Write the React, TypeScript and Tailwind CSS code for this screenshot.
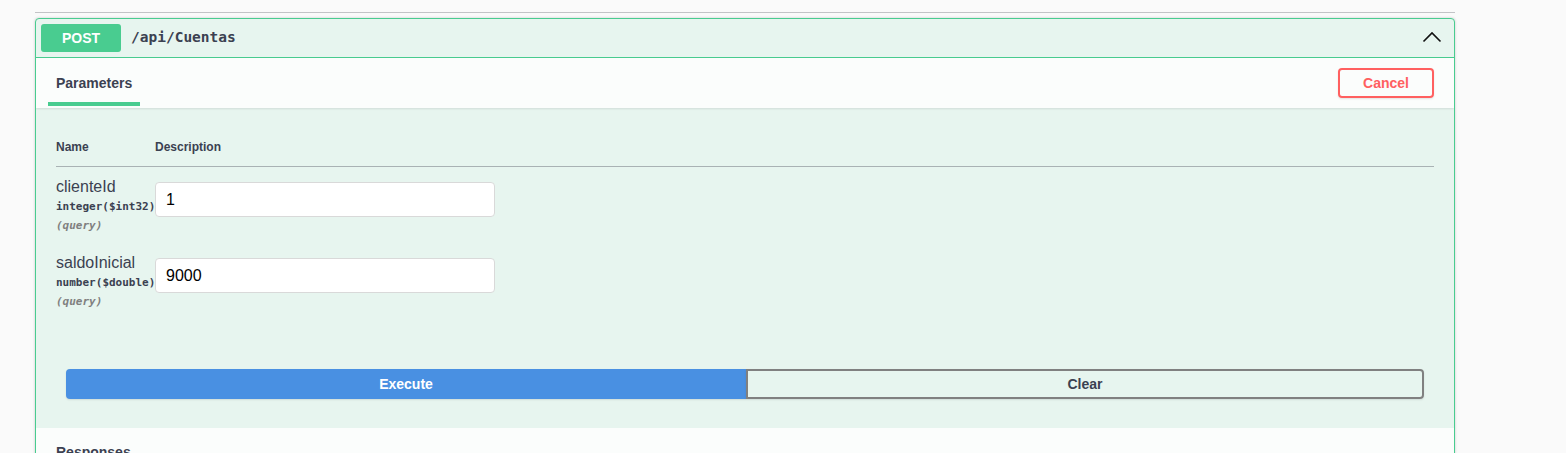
const sans = "font-['Liberation_Sans',Arial,sans-serif]";
const mono = "font-['DejaVu_Sans_Mono','Liberation_Mono',monospace]";

const params = [
  { name: "clienteId", type: "integer", format: "$int32", value: "1" },
  { name: "saldoInicial", type: "number", format: "$double", value: "9000" },
];

const Chevron = () => (
  <svg width="20" height="12" viewBox="0 0 20 12" fill="none" className="block">
    <polyline points="1.5,10.5 10,2 18.5,10.5" stroke="#111" strokeWidth="1.6" />
  </svg>
);

const ParamRow = ({ p }: { p: (typeof params)[number] }) => (
  <div className="flex py-[10px]">
    <div className="w-[99px] shrink-0 text-[#3b4151]">
      <div className="text-[16px] leading-[20px]">{p.name}</div>
      <div className={`${mono} pt-[3px] text-[11px] font-bold leading-[14px] whitespace-nowrap`}>
        {p.type}
        <span className="text-[#3b4151]">({p.format})</span>
      </div>
      <div className={`${mono} pt-[5px] text-[11px] italic font-bold leading-[14px] text-[#808080]`}>(query)</div>
    </div>
    <div className="pt-[5px]">
      <input
        readOnly
        value={p.value}
        className={`${sans} h-[35px] w-[340px] rounded-[4px] border border-[#d9d9d9] bg-white px-[10px] text-[16px] text-black outline-none`}
      />
    </div>
  </div>
);

export default function App() {
  return (
    <div className={`${sans} min-h-screen w-full bg-[#fafafa] text-[#3b4151]`}>
      <div className="ml-[35px] w-[1420px] pt-[12px]">
        <div className="h-[6px] border-t border-[#c2c3c6]" />

        <div className="overflow-hidden rounded-[4px] border border-[#49cc90] bg-[#e7f5ef] shadow-[0_0_3px_rgba(0,0,0,0.19)]">
          {/* summary bar */}
          <div className="flex h-[39px] items-center border-b border-[#49cc90] pl-[5px] pr-[12px]">
            <div className="flex h-[28px] w-[80px] items-center justify-center rounded-[3px] bg-[#49cc90] text-[14px] font-bold text-white">
              POST
            </div>
            <span className={`${mono} ml-[10px] text-[14.5px] font-bold text-[#3b4151]`}>/api/Cuentas</span>
            <div className="ml-auto pb-[3px]">
              <Chevron />
            </div>
          </div>

          {/* parameters header */}
          <div className="flex h-[50px] items-center bg-[#fbfdfc] px-[20px] shadow-[0_1px_2px_rgba(0,0,0,0.1)]">
            <div className="relative -ml-[8px] h-full px-[8px]">
              <h4 className="pt-[16px] text-[14px] font-bold leading-[18px]">Parameters</h4>
              <div className="absolute bottom-[2px] left-0 h-[4px] w-full bg-[#49cc90]" />
            </div>
            <button className="ml-auto h-[30px] w-[96px] rounded-[4px] border-2 border-[#ff6060] text-[14px] font-bold text-[#ff6060] shadow-[0_1px_2px_rgba(0,0,0,0.1)]">
              Cancel
            </button>
          </div>

          {/* parameters body */}
          <div className="px-[20px] pt-[20px]">
            <div className="flex border-b border-[#a9b2b4] pb-[11px] pt-[12px] text-[12px] font-bold leading-[15px]">
              <div className="w-[99px]">Name</div>
              <div>Description</div>
            </div>
            {params.map((p) => (
              <ParamRow key={p.name} p={p} />
            ))}
          </div>

          {/* execute */}
          <div className="flex px-[30px] pb-[29px] pt-[50px]">
            <button className="h-[30px] w-[680px] shrink-0 rounded-l-[4px] bg-[#4990e2] text-[14px] font-bold text-white shadow-[0_1px_2px_rgba(0,0,0,0.1)]">
              Execute
            </button>
            <button className="h-[30px] flex-1 rounded-r-[4px] border-2 border-[#808080] text-[14px] font-bold text-[#3b4151] shadow-[0_1px_2px_rgba(0,0,0,0.1)]">
              Clear
            </button>
          </div>

          {/* responses */}
          <div className="h-[60px] bg-[#fbfdfc] px-[20px] pt-[15px]">
            <h4 className="text-[14px] font-bold leading-[18px]">Responses</h4>
          </div>
        </div>
      </div>
    </div>
  );
}
